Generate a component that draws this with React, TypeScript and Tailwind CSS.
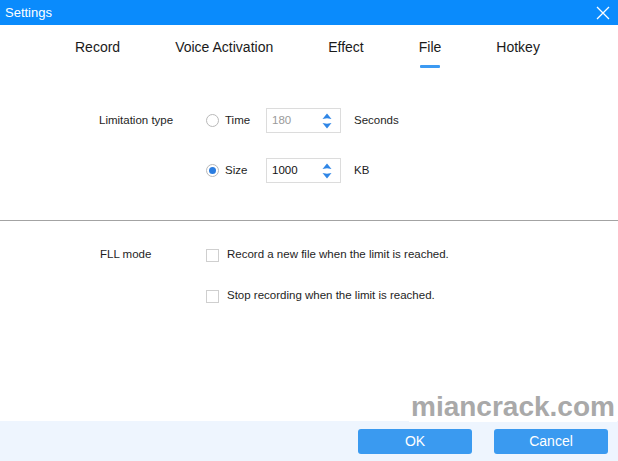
import { useState } from "react";

const tabs = ["Record", "Voice Activation", "Effect", "File", "Hotkey"];

function Spinner() {
  return (
    <svg width="10" height="18" viewBox="0 0 10 18" className="shrink-0">
      <path d="M5 1.5 L9.5 7 L5 6.2 L0.5 7 Z" fill="#2f86e6" />
      <path d="M5 16.5 L9.5 11 L5 11.8 L0.5 11 Z" fill="#2f86e6" />
    </svg>
  );
}

function Radio({ checked }: { checked?: boolean }) {
  return (
    <span className="flex h-[13px] w-[13px] shrink-0 items-center justify-center rounded-full border border-[#b9b9b9] bg-white">
      {checked && <span className="h-[7px] w-[7px] rounded-full bg-[#2b7de0]" />}
    </span>
  );
}

function NumberBox({ value, muted }: { value: string; muted?: boolean }) {
  return (
    <div className="flex h-[25px] w-[75px] items-center justify-between border border-[#dcdcdc] bg-white pl-[5px] pr-[8px]">
      <span className={muted ? "text-[#9a9a9a]" : "text-[#111]"}>{value}</span>
      <Spinner />
    </div>
  );
}

export default function App() {
  const [active] = useState("File");

  return (
    <div
      className="relative flex h-[461px] w-[618px] flex-col overflow-hidden bg-white text-[11.5px] text-[#1e1e1e]"
      style={{ fontFamily: '"Liberation Sans", Arial, sans-serif' }}
    >
      {/* title bar */}
      <div className="flex h-[25px] shrink-0 items-center justify-between bg-[#0a8bfc] pl-[5px] pr-[8px]">
        <span className="text-[13px] text-white">Settings</span>
        <svg width="14" height="14" viewBox="0 0 14 14">
          <path d="M1 1 L13 13 M13 1 L1 13" stroke="#ffffff" strokeWidth="1.3" />
        </svg>
      </div>

      {/* tabs */}
      <div className="flex gap-[55px] pl-[75px] pt-[14px]">
        {tabs.map((t) => (
          <div key={t} className="flex flex-col items-center">
            <span className="text-[14px] leading-[16px] text-[#1a1a1a]">{t}</span>
            <span
              className={
                "mt-[10px] h-[3px] w-[20px] rounded-[1px] " +
                (t === active ? "bg-[#3c9af2]" : "bg-transparent")
              }
            />
          </div>
        ))}
      </div>

      {/* limitation type */}
      <div className="mt-[40px] flex flex-col gap-[25px] pl-[99px]">
        <div className="flex items-center">
          <span className="w-[107px]">Limitation type</span>
          <Radio />
          <span className="ml-[6px] w-[41px]">Time</span>
          <NumberBox value="180" muted />
          <span className="ml-[13px]">Seconds</span>
        </div>
        <div className="flex items-center">
          <span className="w-[107px]" />
          <Radio checked />
          <span className="ml-[6px] w-[41px]">Size</span>
          <NumberBox value="1000" />
          <span className="ml-[13px]">KB</span>
        </div>
      </div>

      <div className="mt-[37px] h-px w-full bg-[#a3a3a3]" />

      {/* FLL mode */}
      <div className="mt-[26px] flex flex-col gap-[25px] pl-[100px]">
        <div className="flex h-[16px] items-center">
          <span className="w-[106px]">FLL mode</span>
          <span className="h-[13px] w-[13px] shrink-0 border border-[#cfcfcf] bg-white" />
          <span className="ml-[8px]">Record a new file when the limit is reached.</span>
        </div>
        <div className="flex h-[16px] items-center">
          <span className="w-[106px]" />
          <span className="h-[13px] w-[13px] shrink-0 border border-[#cfcfcf] bg-white" />
          <span className="ml-[8px]">Stop recording when the limit is reached.</span>
        </div>
      </div>

      <div className="flex-1" />

      {/* footer */}
      <div className="flex h-[40px] shrink-0 items-center justify-end gap-[22px] bg-[#eef5fe] pr-[10px]">
        <button className="h-[25px] w-[114px] rounded-[3px] bg-[#3a9af0] text-[14px] text-white">
          OK
        </button>
        <button className="h-[25px] w-[114px] rounded-[3px] bg-[#3a9af0] text-[14px] text-white">
          Cancel
        </button>
      </div>

      {/* watermark */}
      <div className="absolute left-[409px] top-[392px] bg-white px-[2px] text-[28px] font-extrabold leading-[30px] text-[#a9a9a9]">
        miancrack.com
      </div>
    </div>
  );
}
